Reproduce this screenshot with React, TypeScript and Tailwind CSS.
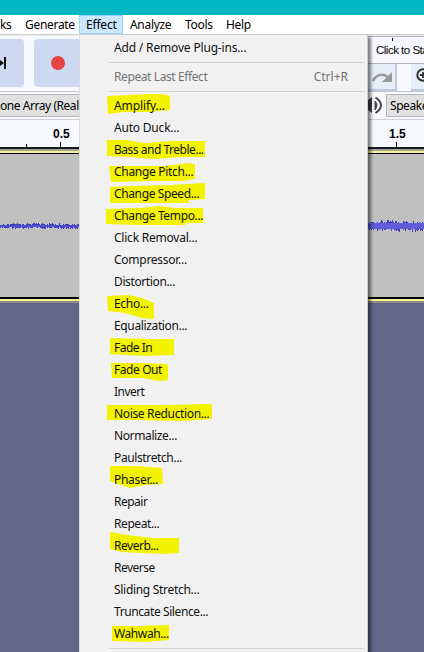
import React from "react";

type Item = { label: string; tracking?: string; mark?: string };

// Highlighter strokes: outlines relative to the row, origin at x = 100, top of the row.
const effects: Item[] = [
  { label: "Amplify...", tracking: "tracking-[-0.1px]", mark: "M7 1 L30 0 L46 -1 L62 -1 L70 1 L70 15 L50 17 L24 17 L8 19 Z" },
  { label: "Auto Duck...", tracking: "tracking-[-0.2px]" },
  { label: "Bass and Treble...", tracking: "tracking-[-0.48px]", mark: "M7 1 L25 1 L45 4 L70 2 L105 2 L105 18 L80 18 L55 20 L30 18 L7 17 Z" },
  { label: "Change Pitch...", mark: "M9 5 L40 5 L65 5 L80 3 L87 2 L95 3 L95 18 L82 20 L50 20 L11 21 Z" },
  { label: "Change Speed...", tracking: "tracking-[-0.38px]", mark: "M10 4 L35 3 L70 2 L105 0 L105 16 L89 17 L88 20 L10 20 Z" },
  { label: "Change Tempo...", tracking: "tracking-[-0.36px]", mark: "M6 4 L40 3 L60 1 L75 3 L103 3 L103 18 L86 18 L85 20 L40 20 L6 19 Z" },
  { label: "Click Removal...", tracking: "tracking-[-0.22px]" },
  { label: "Compressor...", tracking: "tracking-[-0.26px]" },
  { label: "Distortion...", tracking: "tracking-[-0.38px]" },
  { label: "Echo...", mark: "M7 3 L28 2 L42 5 L54 10 L54 26 L42 25 L25 20 L8 18 Z" },
  { label: "Equalization...", tracking: "tracking-[-0.36px]" },
  { label: "Fade In", tracking: "tracking-[-0.5px]", mark: "M10 1 L55 2 L74 2 L74 18 L45 19 L25 18 L10 17 Z" },
  { label: "Fade Out", tracking: "tracking-[-0.42px]", mark: "M11 4 L40 4 L68 5 L68 21 L60 22 L43 19 L12 19 Z" },
  { label: "Invert", tracking: "tracking-[-0.55px]" },
  { label: "Noise Reduction...", tracking: "tracking-[-0.35px]", mark: "M7 2 L60 2 L112 1 L112 16 L80 18 L40 17 L7 17 Z" },
  { label: "Normalize...", tracking: "tracking-[-0.38px]" },
  { label: "Paulstretch...", tracking: "tracking-[-0.38px]" },
  { label: "Phaser...", mark: "M10 -3 L35 -3 L62 -1 L63 15 L45 16 L30 19 L15 14 L10 12 Z" },
  { label: "Repair", tracking: "tracking-[-0.5px]" },
  { label: "Repeat...", tracking: "tracking-[-0.42px]" },
  { label: "Reverb...", tracking: "tracking-[-0.48px]", mark: "M10 -3 L28 0 L52 3 L79 3 L79 18 L65 19 L40 18 L22 17 L10 14 Z" },
  { label: "Reverse", tracking: "tracking-[-0.5px]" },
  { label: "Sliding Stretch..." },
  { label: "Truncate Silence...", tracking: "tracking-[-0.4px]" },
  { label: "Wahwah...", tracking: "tracking-[-0.4px]", mark: "M12 3 L35 3 L69 2 L69 17 L45 19 L12 18 Z" },
];

function Row({ label, tracking = "tracking-[-0.3px]", mark, shortcut }: Item & { shortcut?: string }) {
  return (
    <div className={`relative flex h-[22px] shrink-0 items-center justify-between pl-[34px] pr-[19px] leading-[22px] ${shortcut ? "text-[#747474]" : "text-[#111]"}`}>
      {mark && (
        <svg className="absolute left-5 top-0 overflow-visible" width="120" height="22">
          <path d={mark} fill="#f3f300" />
        </svg>
      )}
      <span className={`relative ${tracking}`}>{label}</span>
      {shortcut && <span>{shortcut}</span>}
    </div>
  );
}

function Separator() {
  return (
    <div className="flex h-[7px] shrink-0 items-center pl-[29px] pr-[3px]">
      <div className="h-px w-full bg-[#d3d3d3]" />
    </div>
  );
}

function Wave({ width, seed, amp }: { width: number; seed: number; amp: number }) {
  const at = (x: number, k: number) => {
    const n = Math.sin((x + seed) * 12.9898 * k) * 43758.5453;
    return n - Math.floor(n);
  };
  const xs = Array.from({ length: width }, (_, x) => x);
  const loud = amp > 3;
  return (
    <svg width={width} height="16" viewBox={`0 0 ${width} 16`} shapeRendering="crispEdges">
      {xs.map((x) => {
        const grow = loud ? 0.6 + 0.4 * Math.min(1, x / 14) : x < 12 ? 0.4 : 1;
        const up = (loud ? 2 : 1) + at(x, 1) * amp * grow;
        const down = (loud ? 2 : 1) + at(x, 2) * amp * grow;
        return <rect key={x} x={x} y={8 - up} width="1" height={up + down} fill="#403fbd" />;
      })}
      <rect y={loud ? 5 : 7} width={width} height={loud ? 6 : 2} fill="#625fdc" opacity={loud ? 0.9 : 0.45} />
    </svg>
  );
}

export default function App() {
  return (
    <div className="relative flex h-[652px] w-[424px] flex-col overflow-hidden bg-[#646687] font-['Noto_Sans','Open_Sans',sans-serif] text-[12px] text-black">
      <header className="h-[15px] shrink-0 bg-[#00b7c3]" />
      <nav className="flex h-[19px] shrink-0 items-stretch bg-white leading-[20px] tracking-[-0.3px]">
        <span className="w-[25px]">ks</span>
        <span className="w-[54px]">Generate</span>
        <span className="w-[44px] border border-[#99d1ff] bg-[#cce8ff] pl-[6px] leading-[18px] tracking-[-0.2px]">Effect</span>
        <span className="w-[62px] pl-[7px]">Analyze</span>
        <span className="w-[41px]">Tools</span>
        <span>Help</span>
      </nav>
      <div className="h-[2px] shrink-0 border-t border-[#cfcfcf] bg-[#ececec]" />

      <section className="flex h-[56px] shrink-0 justify-between border-b border-[#c4c4c8] bg-[#f8f9ff]">
        <div className="flex w-[80px] gap-[10px] pt-[3px]">
          <div className="flex h-[48px] w-[24px] items-center rounded-r-[4px] bg-[#cdd9ef]">
            <svg width="8" height="14" viewBox="0 0 8 14">
              <path d="M0 4 L4 7 L0 10 Z M4 1 H6 V13 H4 Z" fill="#111" />
            </svg>
          </div>
          <div className="flex h-[48px] flex-1 items-center rounded-l-[4px] bg-[#cdd9ef] pl-[17px]">
            <div className="size-[14px] rounded-full bg-[#e74343]" />
          </div>
        </div>
        <div className="flex w-[56px] flex-col">
          <div className="flex h-[28px] flex-col border-b border-t border-[#b4b4b8]">
            <div className="ml-[24px] mt-px h-[3px] w-px shrink-0 bg-black" />
            <span className="whitespace-nowrap pl-[8px] font-['Liberation_Sans',sans-serif] text-[11.5px] leading-[19px] tracking-[-0.5px]">Click to Sta</span>
          </div>
          <div className="flex h-[27px] justify-between">
            <div className="flex h-[27px] w-[29px] items-center justify-center border-b-2 border-r-2 border-[#bccae4] bg-[#e7edf9]">
              <svg width="22" height="14" viewBox="0 0 22 14">
                <path d="M2 11 C5 4 13 3 18 8" fill="none" stroke="#999" strokeWidth="2.5" />
                <path d="M21 2 V12 H11 Z" fill="#999" />
              </svg>
            </div>
            <div className="w-[13px] overflow-hidden border-b-2 border-[#bccae4] bg-[#e7edf9] pl-[5px] pt-[3px]">
              <svg width="15" height="18" viewBox="0 0 15 18">
                <circle cx="7" cy="8" r="5.7" fill="none" stroke="#333" strokeWidth="2" />
                <path d="M4 8 H10 M7 5 V11" stroke="#333" strokeWidth="1.8" />
              </svg>
            </div>
          </div>
        </div>
      </section>

      <section className="flex h-[28px] shrink-0 justify-between border-b border-[#cfcfd4] bg-[#f8f9ff] pt-[2px]">
        <div className="h-[23px] w-[80px] whitespace-nowrap border-y border-[#b5b5b5] bg-[#e1e1e1] leading-[22px] tracking-[-0.45px]">one Array (Realt</div>
        <div className="flex w-[56px]">
          <svg className="shrink-0" width="18" height="23" viewBox="0 0 18 23">
            <path d="M0 6 L4 3 V19 L0 16 Z" fill="#444" />
            <path d="M7 7 Q11 11 7 16 Z" fill="#444" stroke="#444" />
            <path d="M7.5 3.5 Q18.5 11 7.5 19" fill="none" stroke="#444" strokeWidth="2" />
          </svg>
          <div className="h-[23px] flex-1 whitespace-nowrap border border-r-0 border-[#b5b5b5] bg-[#e1e1e1] pl-[3px] leading-[21px] tracking-[-0.45px]">Speake</div>
        </div>
      </section>

      <section className="flex h-[27px] shrink-0 justify-between bg-[#f8f9ff] font-['Liberation_Sans',sans-serif] text-[12px] font-bold leading-[28px]">
        <div className="flex w-[80px] flex-col pl-[26px]">
          <span className="h-[22px] pl-[27px]">0.5</span>
          <div className="flex items-end gap-[33px]">
            <i className="h-[3px] w-px bg-black" />
            <i className="h-[5px] w-px bg-black" />
          </div>
        </div>
        <div className="flex w-[56px] flex-col">
          <span className="h-[22px] pl-[21px]">1.5</span>
          <i className="ml-[28px] h-[5px] w-px bg-black" />
        </div>
      </section>

      <section className="shrink-0">
        <div className="h-[2px] bg-[#181828]" />
        <div className="h-[2px] bg-[#a5a48c]" />
        <div className="h-[2px] bg-[#f4f39a]" />
        <div className="h-px bg-black" />
        <div className="flex h-[143px] items-center justify-between bg-[#c0c0c0]">
          <Wave width={80} seed={3} amp={2} />
          <Wave width={56} seed={17} amp={4} />
        </div>
        <div className="h-[2px] bg-black" />
        <div className="h-[2px] bg-[#f4f39a]" />
        <div className="h-[2px] bg-[#8c8c83]" />
      </section>

      <div className="absolute left-[79px] top-[34px] flex h-[640px] w-[289px] flex-col border border-[#cccccc] border-l-[#dcdcdc] bg-[#f1f1f1] pt-[2px] shadow-[3px_3px_3px_rgba(0,0,0,0.5)]">
        <Row label="Add / Remove Plug-ins..." tracking="tracking-[-0.17px]" />
        <Separator />
        <Row label="Repeat Last Effect" tracking="tracking-[-0.4px]" shortcut="Ctrl+R" />
        <Separator />
        {effects.map((e) => (
          <Row key={e.label} {...e} />
        ))}
        <Separator />
      </div>
    </div>
  );
}
